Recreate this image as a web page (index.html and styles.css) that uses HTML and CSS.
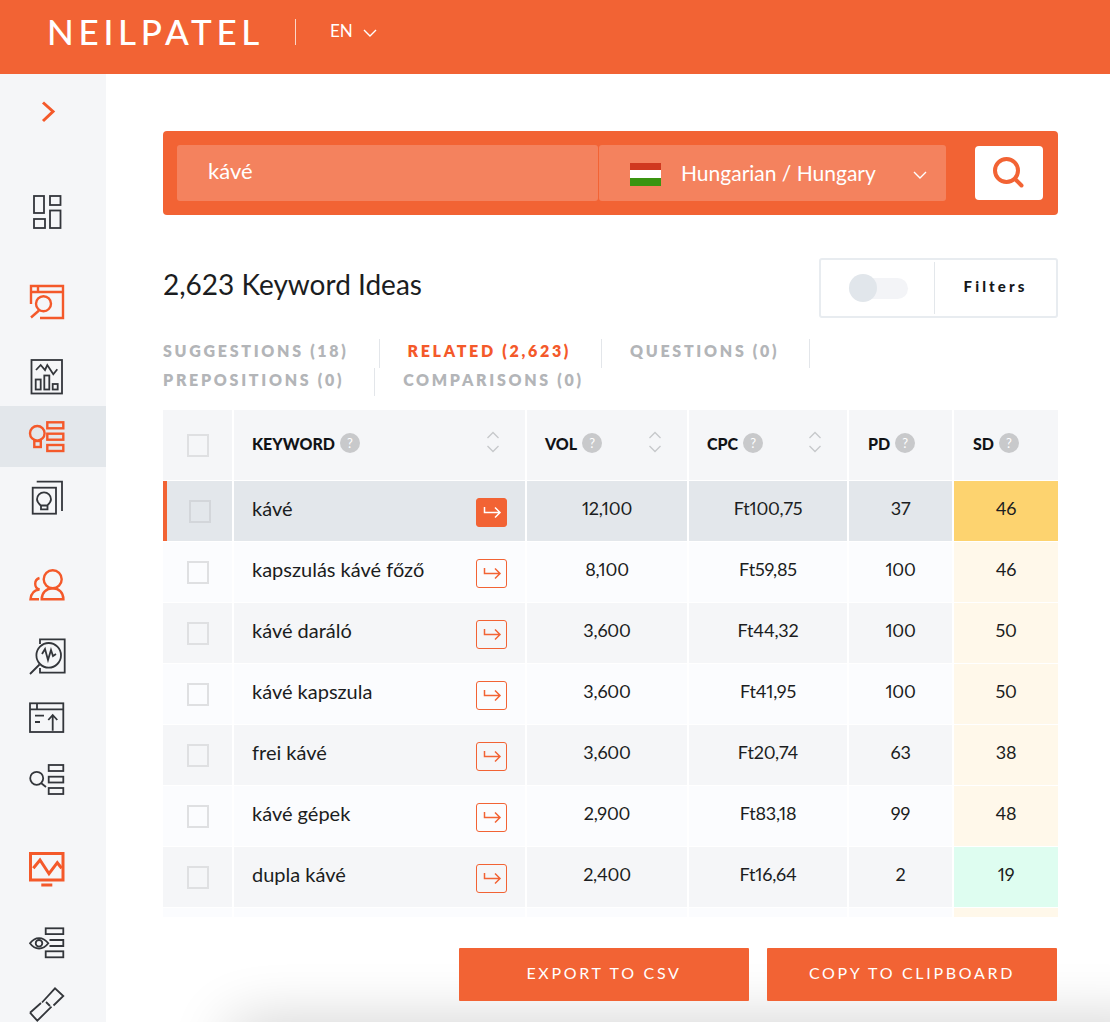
FILE: index.html
```html
<!DOCTYPE html>
<html lang="en">
<head>
<meta charset="utf-8">
<title>Keyword Ideas</title>
<link rel="stylesheet" href="styles.css">
</head>
<body>
<header class="topbar">
  <div class="logo">NEILPATEL</div>
  <div class="lang">EN
    <svg class="lang-chev" width="14" height="9" viewBox="0 0 14 9"><path d="M1 1l6 6 6-6"/></svg>
  </div>
</header>
<div class="shell">
  <nav class="sidebar">
    <div class="nav-item s-chevron"><svg class="ic or" viewBox="0 0 40 40"><path class="thick" d="M16 11.500L26 20.500 16 30"/></svg></div>
    <div class="nav-item s-dash"><svg class="ic dk" viewBox="0 0 40 40"><rect x="7" y="4" width="10" height="17"/><rect x="23" y="4" width="10.500" height="9"/><rect x="7" y="27" width="11" height="9"/><rect x="23" y="18.500" width="10.500" height="17.500"/></svg></div>
    <div class="nav-item s-search"><svg class="ic or" viewBox="0 0 40 40"><path d="M4 23V5H36V37H13M4 11H36M11 5V11"/><circle cx="16.500" cy="22.700" r="7.500"/><path d="M12 29.500L4 36.500"/></svg></div>
    <div class="nav-item s-chart"><svg class="ic dk" viewBox="0 0 40 40"><rect x="4.500" y="4" width="30.500" height="33.500"/><path d="M9 14l4.700-5 4.300 5 2.300-5 6 9.300 4-5"/><rect x="8.700" y="23.500" width="5" height="10"/><rect x="17.300" y="19.500" width="5" height="14"/><rect x="25.700" y="28" width="5" height="5.500"/></svg></div>
    <div class="nav-item nav-active"><svg class="ic or" viewBox="0 0 40 40"><circle cx="10.300" cy="16.300" r="7.300"/><rect x="7.300" y="24" width="6.500" height="6"/><rect x="20.300" y="5.300" width="16" height="6"/><rect x="20.300" y="16.700" width="16" height="6"/><rect x="20.300" y="28" width="16" height="6"/></svg></div>
    <div class="nav-item"><svg class="ic dk" viewBox="0 0 40 40"><path d="M9.700 3.700H35V33"/><rect x="5.700" y="9.700" width="23.300" height="26"/><path d="M13.700 27.500C11.500 25.500 10 23.800 10 21.300a7 7 0 0 1 14 0c0 2.500-1.500 4.200-3.700 6.200z"/><path d="M14 28v3.300h6.500V28"/></svg></div>
    <div class="nav-item s-users"><svg class="ic or" viewBox="0 0 40 40"><circle cx="25.700" cy="14.300" r="9"/><path d="M14.700 34.300c0-6.500 4.500-11 11-11s10.700 4.500 10.700 11z"/><path d="M12.500 13a6 6 0 0 0 0 11.500C7 25 4 29 3.500 34.300H12"/></svg></div>
    <div class="nav-item s-audit"><svg class="ic dk" viewBox="0 0 40 40"><path d="M13 8V3.300H37.700V36.700H13V32"/><circle cx="21.700" cy="19.300" r="12.300"/><path d="M12.500 28.500L3 38M15 18l3-5 3 11 3-10 2 6 3-2"/></svg></div>
    <div class="nav-item s-upload"><svg class="ic dk" viewBox="0 0 40 40"><rect x="3" y="5.300" width="33.300" height="28.700"/><path d="M3 11.300H36.300M10 5.300V11.300M8 17.700H17M8 24H13M25.700 32.700V17M21.300 22l4.400-5 4.600 5"/></svg></div>
    <div class="nav-item"><svg class="ic dk" viewBox="0 0 40 40"><circle cx="9.700" cy="19.300" r="6.500"/><path d="M14 24l5 4"/><rect x="21.700" y="6" width="14.600" height="6"/><rect x="21.700" y="17.700" width="14.600" height="5.800"/><rect x="21.700" y="29" width="14.600" height="6"/></svg></div>
    <div class="nav-item s-monitor"><svg class="ic or" viewBox="0 0 40 40"><rect class="thick" x="3.500" y="4.500" width="32.500" height="26.500"/><path class="thick" d="M6.300 19.300L13 11l9 13.700 8.300-11 4.400 5.600M14.300 36H25.300"/></svg></div>
    <div class="nav-item s-eye"><svg class="ic dk" viewBox="0 0 40 40"><path d="M3 20.300c5-7 13-7 18.300 0-5.300 7-13.300 7-18.300 0z"/><circle cx="12" cy="20.300" r="3.300"/><rect x="18.700" y="5.300" width="17.600" height="5.800"/><path d="M22.500 17H36.300V23H22.500"/><rect x="18.700" y="28.300" width="17.600" height="6"/></svg></div>
    <div class="nav-item s-link"><svg class="ic dk" viewBox="0 0 40 40"><path d="M15 17.500L28 3.300 36.300 11 26.500 20.500M3 27.700L14 18M3 27.700L10.300 35.700 24.500 21.700M19 17l4 4"/></svg></div>
  </nav>

  <main class="main">
    <section class="searchbar">
      <div class="search-input">kávé</div>
      <div class="search-select">
        <span class="flag"><i class="fl-r"></i><i class="fl-w"></i><i class="fl-g"></i></span>
        <span class="select-label">Hungarian / Hungary</span>
        <svg class="select-chev" width="14" height="9" viewBox="0 0 14 9"><path d="M1 1l6 6 6-6"/></svg>
      </div>
      <button class="search-btn" type="button">
        <svg width="36" height="36" viewBox="0 0 36 36"><circle cx="15.500" cy="15.500" r="11.500"/><path d="M24 24L30.500 30.500"/></svg>
      </button>
    </section>

    <section class="title-row">
      <h1 class="title">2,623 Keyword Ideas</h1>
      <div class="filters">
        <div class="filter-toggle"><span class="track"><span class="knob"></span></span></div>
        <div class="filter-label">Filters</div>
      </div>
    </section>

    <section class="tabs">
      <span class="tab">SUGGESTIONS (18)</span>
      <span class="tab tab-on">RELATED (2,623)</span>
      <span class="tab">QUESTIONS (0)</span>
      <span class="tab">PREPOSITIONS (0)</span>
      <span class="tab tab-last">COMPARISONS (0)</span>
    </section>

    <section class="table">
      <div class="row head">
        <div class="cell c-check"><span class="box"></span></div>
        <div class="cell th">KEYWORD <span class="help">?</span><svg class="sort" width="14" height="24" viewBox="0 0 14 24"><path d="M1.500 8L7 2.500 12.500 8M1.500 16L7 21.500 12.500 16"/></svg></div>
        <div class="cell th">VOL <span class="help">?</span><svg class="sort" width="14" height="24" viewBox="0 0 14 24"><path d="M1.500 8L7 2.500 12.500 8M1.500 16L7 21.500 12.500 16"/></svg></div>
        <div class="cell th">CPC <span class="help">?</span><svg class="sort" width="14" height="24" viewBox="0 0 14 24"><path d="M1.500 8L7 2.500 12.500 8M1.500 16L7 21.500 12.500 16"/></svg></div>
        <div class="cell th th-end">PD <span class="help">?</span></div>
        <div class="cell th th-end">SD <span class="help">?</span></div>
      </div>

      <div class="row selected">
        <div class="cell c-check"><span class="box"></span></div>
        <div class="cell kw">kávé<span class="go go-on"><svg width="31" height="29" viewBox="0 0 31 29"><path d="M8.500 9v5.500H24M19 9.500l5 5-5 5"/></svg></span></div>
        <div class="cell num">12,100</div><div class="cell num">Ft100,75</div><div class="cell num">37</div><div class="cell num sd-strong">46</div>
      </div>
      <div class="row odd">
        <div class="cell c-check"><span class="box"></span></div>
        <div class="cell kw">kapszulás kávé főző<span class="go"><svg width="31" height="29" viewBox="0 0 31 29"><path d="M8.500 9v5.500H24M19 9.500l5 5-5 5"/></svg></span></div>
        <div class="cell num">8,100</div><div class="cell num">Ft59,85</div><div class="cell num">100</div><div class="cell num sd-mid">46</div>
      </div>
      <div class="row even">
        <div class="cell c-check"><span class="box"></span></div>
        <div class="cell kw">kávé daráló<span class="go"><svg width="31" height="29" viewBox="0 0 31 29"><path d="M8.500 9v5.500H24M19 9.500l5 5-5 5"/></svg></span></div>
        <div class="cell num">3,600</div><div class="cell num">Ft44,32</div><div class="cell num">100</div><div class="cell num sd-mid">50</div>
      </div>
      <div class="row odd">
        <div class="cell c-check"><span class="box"></span></div>
        <div class="cell kw">kávé kapszula<span class="go"><svg width="31" height="29" viewBox="0 0 31 29"><path d="M8.500 9v5.500H24M19 9.500l5 5-5 5"/></svg></span></div>
        <div class="cell num">3,600</div><div class="cell num">Ft41,95</div><div class="cell num">100</div><div class="cell num sd-mid">50</div>
      </div>
      <div class="row even">
        <div class="cell c-check"><span class="box"></span></div>
        <div class="cell kw">frei kávé<span class="go"><svg width="31" height="29" viewBox="0 0 31 29"><path d="M8.500 9v5.500H24M19 9.500l5 5-5 5"/></svg></span></div>
        <div class="cell num">3,600</div><div class="cell num">Ft20,74</div><div class="cell num">63</div><div class="cell num sd-mid">38</div>
      </div>
      <div class="row odd">
        <div class="cell c-check"><span class="box"></span></div>
        <div class="cell kw">kávé gépek<span class="go"><svg width="31" height="29" viewBox="0 0 31 29"><path d="M8.500 9v5.500H24M19 9.500l5 5-5 5"/></svg></span></div>
        <div class="cell num">2,900</div><div class="cell num">Ft83,18</div><div class="cell num">99</div><div class="cell num sd-mid">48</div>
      </div>
      <div class="row even">
        <div class="cell c-check"><span class="box"></span></div>
        <div class="cell kw">dupla kávé<span class="go"><svg width="31" height="29" viewBox="0 0 31 29"><path d="M8.500 9v5.500H24M19 9.500l5 5-5 5"/></svg></span></div>
        <div class="cell num">2,400</div><div class="cell num">Ft16,64</div><div class="cell num">2</div><div class="cell num sd-low">19</div>
      </div>
      <div class="row odd">
        <div class="cell c-check"></div><div class="cell"></div><div class="cell"></div><div class="cell"></div><div class="cell"></div><div class="cell sd-mid"></div>
      </div>
    </section>

    <section class="actions">
      <button class="action" type="button">EXPORT TO CSV</button>
      <button class="action" type="button">COPY TO CLIPBOARD</button>
    </section>
  </main>
</div>
</body>
</html>
```
FILE: styles.css
```css
* { box-sizing: border-box; }
html, body { margin: 0; padding: 0; height: 1022px; overflow: hidden; background: #fff; }
body { font-family: Lato, "Open Sans", sans-serif; color: #1b1d21; }

.topbar { height: 74px; background: #f26334; display: flex; align-items: center; padding: 0 0 10px 47px; color: #fff; }
.logo { font-size: 35px; line-height: 1; letter-spacing: 4.7px; width: 248px; height: 26px; display: flex; align-items: center; font-weight: 500; padding-bottom: 2px; }
.lang { border-left: 1px solid #fbd6c8; height: 26px; padding: 0 0 4px 34px; display: flex; align-items: center; font-size: 17px; }
.lang-chev { margin-left: 10px; margin-top: 7px; }
.lang-chev path, .select-chev path { fill: none; stroke: #fff; stroke-width: 1.4; }

.shell { display: flex; height: 948px; }
.sidebar { width: 106px; flex: none; background: #f5f6f8; overflow: hidden; padding-top: 6px; }
.nav-item { height: 61px; padding-right: 12px; display: flex; align-items: center; justify-content: center; }
.nav-active { background: #e3e7eb; }
.s-dash { margin-top: 40px; }
.s-search { margin-top: 28px; }
.s-chart { margin-top: 14px; }
.s-users { margin-top: 26px; }
.s-audit { margin-top: 10px; }
.s-upload { margin-top: 1px; }
.s-monitor { margin-top: 29px; }
.s-eye { margin-top: 13px; }
.s-link { margin-top: 1px; }
.ic { width: 40px; height: 40px; fill: none; }
.ic.or { stroke: #f4592a; stroke-width: 2.4; }
.ic.dk { stroke: #33363b; stroke-width: 1.8; }
.ic .thick { stroke-width: 3; }

.main { flex: 1; padding: 57px 52px 0 57px; position: relative; overflow: hidden; }
.main::after { content: ""; position: absolute; left: 120px; right: -60px; bottom: -50px; height: 50px; box-shadow: 0 0 60px rgba(0, 0, 0, .2); border-radius: 30px; }

.searchbar { height: 84px; background: #f26334; border-radius: 4px; padding: 14px 15px 14px 14px; display: flex; align-items: center; color: #fff; }
.search-input { width: 421px; height: 56px; background: #f4825e; border-radius: 3px; padding-left: 31px; font-size: 22px; line-height: 52px; }
.search-select { width: 347px; height: 56px; margin-left: 1px; background: #f4825e; border-radius: 3px; display: flex; align-items: center; padding-left: 31px; }
.flag { width: 31px; height: 23px; display: flex; flex-direction: column; flex: none; margin-top: 2px; }
.flag i { flex: 1; display: block; }
.fl-r { background: #d0391f; }
.fl-w { background: #fff; }
.fl-g { background: #3a9410; }
.select-label { font-size: 21px; margin-left: 20px; margin-bottom: 2px; width: 232px; white-space: nowrap; }
.select-chev { margin-top: 4px; }
.search-btn { width: 68px; height: 54px; margin-left: 29px; background: #fff; border: 0; border-radius: 4px; padding: 0; display: flex; align-items: center; justify-content: center; }
.search-btn svg { fill: none; stroke: #f26334; stroke-width: 4; stroke-linecap: round; }

.title-row { margin-top: 43px; height: 60px; display: flex; align-items: center; justify-content: space-between; }
.title { margin: 0 0 8px; font-size: 28px; font-weight: 400; color: #1b1d21; }
.filters { width: 239px; height: 60px; border: 2px solid #e8ecf0; border-radius: 3px; display: flex; align-items: center; background: #fff; }
.filter-toggle { width: 114px; height: 52px; border-right: 1px solid #e3e7eb; display: flex; align-items: center; padding-left: 28px; }
.track { width: 59px; height: 21px; background: #f3f4f7; border-radius: 11px; display: flex; align-items: center; }
.knob { width: 28px; height: 28px; border-radius: 50%; background: #e1e6eb; flex: none; }
.filter-label { flex: 1; text-align: center; font-size: 15px; font-weight: 900; letter-spacing: 3.1px; color: #16181b; padding-bottom: 4px; }

.tabs { margin-top: 21px; width: 700px; display: flex; flex-wrap: wrap; font-size: 16px; font-weight: 800; letter-spacing: 2.7px; color: #b3b5b8; }
.tab { height: 28.500px; line-height: 23px; padding-right: 30px; border-right: 1px solid #e3e6ea; margin-right: 28px; white-space: nowrap; }
.tab-on { color: #f4592a; }
.tab-last { border-right: 0; }

.table { margin-top: 14px; height: 507px; overflow: hidden; display: flex; flex-direction: column; gap: 1px; }
.row { flex: none; height: 60px; display: grid; grid-template-columns: 69px 291px 160px 158px 103px 104px; column-gap: 2px; }
.row.head { height: 70px; }
.head .cell { background: #f5f6f8; }
.selected .cell { background: #e3e7eb; }
.odd .cell { background: #fbfcfe; }
.even .cell { background: #f5f6f8; }
.row .sd-strong { background: #fdd36f; }
.row .sd-mid { background: #fff8ea; }
.row .sd-low { background: #defdf0; }

.cell { display: flex; align-items: center; font-size: 18px; position: relative; padding-bottom: 6px; }
.c-check { justify-content: center; }
.selected .c-check { border-left: 4px solid #f26334; }
.box { width: 22px; height: 23px; border: 2px solid #dfe0e2; background: transparent; display: block; margin: 7px 0 0 1px; }
.selected .box { border-color: #d3d6da; }

.th { padding-left: 18px; font-size: 16px; font-weight: 900; color: #111316; letter-spacing: 0; padding-bottom: 4px; }
.th-end { padding-left: 19px; }
.help { width: 20px; height: 20px; border-radius: 50%; background: #c8c9cb; color: #fff; font-size: 13px; font-weight: 400; display: flex; align-items: center; justify-content: center; margin-left: 5px; }
.sort { position: absolute; right: 25px; top: 20px; fill: none; stroke: #c6c8cb; stroke-width: 1.3; }

.kw { padding: 0 18px 6px; justify-content: space-between; font-size: 20px; }
.go { width: 31px; height: 29px; border: 1.500px solid #f26334; border-radius: 3px; display: block; flex: none; margin-top: 9px; }
.go svg { display: block; margin: -1.500px; fill: none; stroke: #f26334; stroke-width: 1.500; }
.go-on { background: #f26334; }
.go-on svg { stroke: #fff; }
.num { justify-content: center; font-variant-numeric: proportional-nums; letter-spacing: -0.2px; }

.actions { margin-top: 31px; padding-right: 1px; display: flex; justify-content: flex-end; gap: 18px; position: relative; z-index: 1; }
.action { width: 290px; height: 53px; background: #f26334; color: #fff; border: 0; border-radius: 1px; font-family: Lato, sans-serif; font-size: 16px; letter-spacing: 2.7px; padding: 0 0 4px; }
```
